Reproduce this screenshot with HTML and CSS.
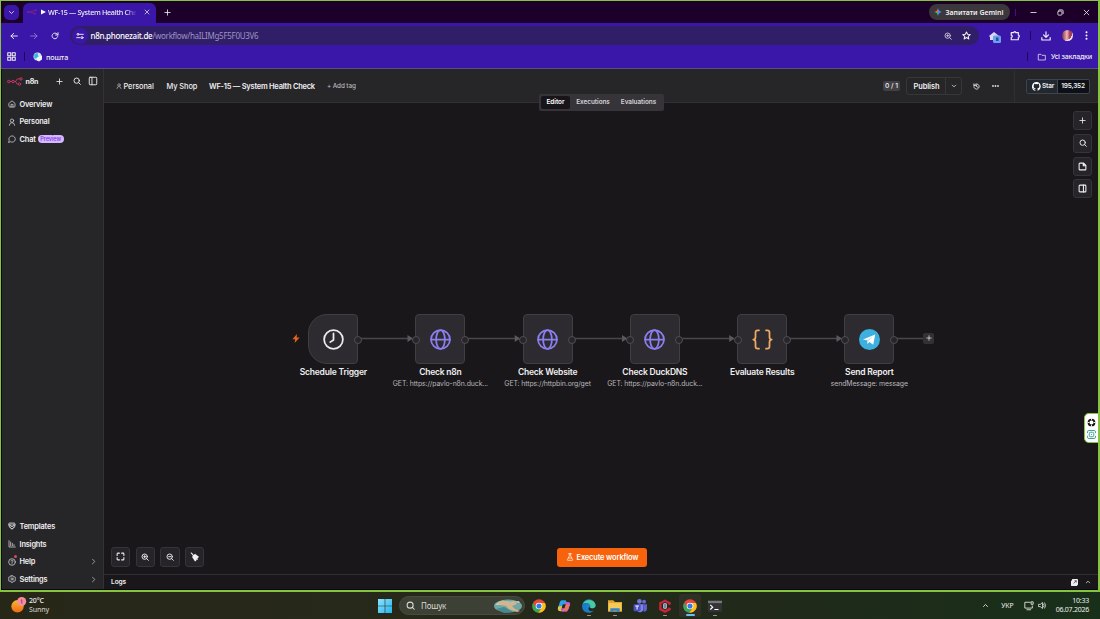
FILE: index.html
```html
<!DOCTYPE html>
<html lang="uk">
<head>
    <meta charset="UTF-8">
    <meta name="viewport" content="width=device-width, initial-scale=1.0">
    <title>▶ WF-15 — System Health Check - n8n</title>
    <link rel="stylesheet" href="styles.css">
</head>
<body>
    <svg class="symbols" width="0" height="0">
        <symbol id="i-chevron-down" viewBox="0 0 24 24"><path d="M5 8.5l7 7 7-7"/></symbol>
        <symbol id="i-chevron-up" viewBox="0 0 24 24"><path d="M5 15.5l7-7 7 7"/></symbol>
        <symbol id="i-chevron-right" viewBox="0 0 24 24"><path d="M8.5 4l8 8-8 8"/></symbol>
        <symbol id="i-x" viewBox="0 0 24 24"><path d="M4 4l16 16M20 4L4 20"/></symbol>
        <symbol id="i-plus" viewBox="0 0 24 24"><path d="M12 3v18M3 12h18"/></symbol>
        <symbol id="i-minus" viewBox="0 0 24 24"><path d="M3 12h18"/></symbol>
        <symbol id="i-back" viewBox="0 0 24 24"><path d="M22 12H3M11 4l-8 8 8 8"/></symbol>
        <symbol id="i-forward" viewBox="0 0 24 24"><path d="M2 12h19M13 4l8 8-8 8"/></symbol>
        <symbol id="i-reload" viewBox="0 0 24 24"><path d="M20 14a8.500 8.500 0 1 1-2-8l3 3M21 2v7h-7"/></symbol>
        <symbol id="i-search" viewBox="0 0 24 24"><circle cx="11" cy="11" r="8"/><path d="M17 17l5 5"/></symbol>
        <symbol id="i-zoom-in" viewBox="0 0 24 24"><circle cx="11" cy="11" r="8"/><path d="M17 17l5 5M11 8v6M8 11h6"/></symbol>
        <symbol id="i-zoom-out" viewBox="0 0 24 24"><circle cx="11" cy="11" r="8"/><path d="M17 17l5 5M8 11h6"/></symbol>
        <symbol id="i-tune" viewBox="0 0 24 24"><circle cx="6" cy="7" r="3"/><path d="M12 7h10M2 17h10"/><circle cx="18" cy="17" r="3"/></symbol>
        <symbol id="i-grid" viewBox="0 0 24 24"><path d="M2 2h8v8H2zM14 2h8v8h-8zM2 14h8v8H2zM14 14h8v8h-8z"/></symbol>
        <symbol id="i-star" viewBox="0 0 24 24"><path d="M12 2.500l2.900 6.400 7 .7-5.300 4.700 1.600 6.900-6.200-3.700-6.200 3.700 1.600-6.900L2.100 9.600l7-.7z"/></symbol>
        <symbol id="i-puzzle" viewBox="0 0 24 24"><path d="M3 4h6a2.500 2.500 0 0 1 5 0h6v6a2.500 2.500 0 0 1 0 5v6H3v-6a2.500 2.500 0 0 0 0-5z"/></symbol>
        <symbol id="i-download" viewBox="0 0 24 24"><path d="M12 2v13M6 9.500l6 6 6-6M2 16v5.500h20V16"/></symbol>
        <symbol id="i-folder" viewBox="0 0 24 24"><path d="M2 4h7l3 3h10v14H2z"/></symbol>
        <symbol id="i-panel" viewBox="0 0 24 24"><rect x="3" y="3" width="18" height="18" rx="2"/><path d="M9.500 3v18"/></symbol>
        <symbol id="i-panel-right" viewBox="0 0 24 24"><rect x="3" y="3" width="18" height="18" rx="2"/><path d="M14.500 3v18"/></symbol>
        <symbol id="i-home" viewBox="0 0 24 24"><path d="M3 10l9-7.500 9 7.500v9a2 2 0 0 1-2 2H5a2 2 0 0 1-2-2z"/><path d="M9 21v-8h6v8"/></symbol>
        <symbol id="i-user" viewBox="0 0 24 24"><circle cx="12" cy="8" r="5"/><path d="M4 22a8 8 0 0 1 16 0"/></symbol>
        <symbol id="i-chat" viewBox="0 0 24 24"><path d="M7.500 20.500A9.500 9.500 0 1 0 3.500 16L2 22z"/></symbol>
        <symbol id="i-box" viewBox="0 0 24 24"><path d="M4 3h16v10l-8 8-8-8zM1 8l11 6 11-6M7 6h10v4l-5 3-5-3zM3 14l9 8 9-8"/></symbol>
        <symbol id="i-insights" viewBox="0 0 24 24"><path d="M3 2v19h19M8 6v11M13 10v7M18 14v3"/></symbol>
        <symbol id="i-help" viewBox="0 0 24 24"><circle cx="12" cy="12" r="10"/><path d="M9 9a3 3 0 1 1 4.500 2.600c-1 .6-1.500 1.200-1.500 2.400M12 17v.8"/></symbol>
        <symbol id="i-gear" viewBox="0 0 24 24"><circle cx="12" cy="12" r="3.200"/><path d="M9.500 2h5l.7 3 2.800 1.200 2.500-1 2 4-1.500 2.800 1.500 2.800-2 4-2.500-1-2.800 1.200-.7 3h-5l-.7-3L6 17.800l-2.500 1-2-4L3 12 1.500 9.200l2-4 2.500 1L8.800 5z"/></symbol>
        <symbol id="i-history" viewBox="0 0 24 24"><path d="M3 3v6h6M3.500 9A9 9 0 1 1 3 13M12 7v5l4 2"/></symbol>
        <symbol id="i-note" viewBox="0 0 24 24"><path d="M15 3H5a2 2 0 0 0-2 2v14a2 2 0 0 0 2 2h14a2 2 0 0 0 2-2V9zM14 3v7h7"/></symbol>
        <symbol id="i-fit" viewBox="0 0 24 24"><path d="M3 9V5a2 2 0 0 1 2-2h4M15 3h4a2 2 0 0 1 2 2v4M21 15v4a2 2 0 0 1-2 2h-4M9 21H5a2 2 0 0 1-2-2v-4"/></symbol>
        <symbol id="i-flask" viewBox="0 0 24 24"><path d="M8 2h8M10 2v7L4 20a1.500 1.500 0 0 0 1.300 2h13.400a1.500 1.500 0 0 0 1.300-2L14 9V2M7 15h10"/></symbol>
        <symbol id="i-n8n" viewBox="0 0 32 18"><circle cx="3.500" cy="9" r="2.400"/><circle cx="12" cy="9" r="2.400"/><circle cx="28" cy="3.800" r="2.400"/><circle cx="25" cy="14.200" r="2.400"/><path d="M6 9h3.500M14.500 9h2c3 0 1.500-5.200 5-5.200h4M16.500 9c3 0 1 5.200 4.500 5.200h1.500"/></symbol>
        <symbol id="i-globe" viewBox="0 0 24 24"><circle cx="12" cy="12" r="10.800"/><ellipse cx="12" cy="12" rx="5" ry="10.800"/><path d="M1.200 12h21.600"/></symbol>
        <symbol id="i-chrome" viewBox="0 0 24 24">
            <circle cx="12" cy="12" r="11.500" fill="#e8453c"/>
            <path d="M2 6.300A11.500 11.500 0 0 0 11 23.500l5.200-8.800L7.500 15z" fill="#34a853"/>
            <path d="M22.300 7H12l4.800 8L11 23.500A11.500 11.500 0 0 0 22.300 7z" fill="#fbc116"/>
            <circle cx="12" cy="12" r="5.700" fill="#fff"/><circle cx="12" cy="12" r="4.400" fill="#3779e6"/>
        </symbol>
    </svg>

    <div class="window">
        <div class="titlebar">
            <div class="tab-search"><svg class="icon s7"><use href="#i-chevron-down"/></svg></div>
            <div class="tab">
                <svg class="n8n-mark tab-mark"><use href="#i-n8n"/></svg>
                <svg class="play" viewBox="0 0 6 6"><path d="M0 0l6 3-6 3z"/></svg>
                <span class="tab-title">WF-15 — System Health Che</span>
                <svg class="icon s6 tab-close"><use href="#i-x"/></svg>
            </div>
            <svg class="icon s7 new-tab"><use href="#i-plus"/></svg>
            <div class="gemini">
                <svg viewBox="0 0 24 24" width="8" height="8">
                    <path d="M12 0q2 10 12 12H12z" fill="#4d8df6"/><path d="M24 12q-10 2-12 12V12z" fill="#4a87ee"/>
                    <path d="M12 24Q10 14 0 12h12z" fill="#3fae62"/><path d="M0 12Q10 10 12 0v12z" fill="#e9684e"/>
                </svg>
                <span>Запитати Gemini</span>
            </div>
            <div class="window-controls">
                <svg class="icon s7"><use href="#i-minus"/></svg>
                <svg class="icon s7" viewBox="0 0 24 24"><rect x="3" y="7" width="14" height="14" rx="3"/><path d="M8 3h9a4 4 0 0 1 4 4v9"/></svg>
                <svg class="icon s7"><use href="#i-x"/></svg>
            </div>
        </div>

        <div class="toolbar">
            <div class="nav">
                <svg class="icon s8"><use href="#i-back"/></svg>
                <svg class="icon s8 disabled"><use href="#i-forward"/></svg>
                <svg class="icon s8"><use href="#i-reload"/></svg>
            </div>
            <div class="address">
                <span class="site-info"><svg class="icon s8"><use href="#i-tune"/></svg></span>
                <span class="url"><b>n8n.phonezait.de</b>/workflow/haILIMg5F5F0U3V6</span>
                <svg class="icon s8 lens"><use href="#i-zoom-in"/></svg>
                <svg class="icon s9"><use href="#i-star"/></svg>
            </div>
            <div class="extensions">
                <div class="ext"><svg viewBox="0 0 12 12" width="12" height="12"><path d="M0 5l5-4 5 4-1 1v3H1V6z" fill="#dcd8ef"/><rect x="4" y="4.500" width="8" height="7.500" rx="1.500" fill="#6ba0f0"/><rect x="7" y="6.500" width="2.500" height="3.500" fill="#284f8f"/></svg></div>
                <svg class="icon s10 puzzle"><use href="#i-puzzle"/></svg>
                <span class="bar-sep"></span>
                <svg class="icon s10"><use href="#i-download"/></svg>
                <div class="avatar"></div>
                <svg class="dots" viewBox="0 0 3 9"><circle cx="1.500" cy="1.200" r="1"/><circle cx="1.500" cy="4.500" r="1"/><circle cx="1.500" cy="7.800" r="1"/></svg>
            </div>
        </div>

        <div class="bookmarks">
            <svg class="icon s9"><use href="#i-grid"/></svg>
            <span class="bar-sep"></span>
            <svg viewBox="0 0 10 10" width="10" height="10"><circle cx="4.500" cy="4.500" r="4" fill="#cfe9f7"/><path d="M1 2.500L4.500.5l1 4.500L1.500 7z" fill="#3eb4da"/><path d="M4 5.500l5-2v4L6 9.500l-2-1z" fill="#f4f2f3"/></svg>
            <span class="bookmark">пошта</span>
            <div class="all-bookmarks">
                <span class="bar-sep"></span>
                <svg class="icon folder"><use href="#i-folder"/></svg>
                <span>Усі закладки</span>
            </div>
        </div>

        <div class="app">
            <aside class="sidebar">
                <div class="brand">
                    <svg class="n8n-mark"><use href="#i-n8n"/></svg>
                    <b>n8n</b>
                    <svg class="icon s7 brand-plus"><use href="#i-plus"/></svg>
                    <svg class="icon s8"><use href="#i-search"/></svg>
                    <svg class="icon s10"><use href="#i-panel"/></svg>
                </div>
                <nav class="menu">
                    <a><svg class="icon s8"><use href="#i-home"/></svg>Overview</a>
                    <a><svg class="icon s8"><use href="#i-user"/></svg>Personal</a>
                    <a><svg class="icon s8"><use href="#i-chat"/></svg>Chat<span class="preview">Preview</span></a>
                </nav>
                <nav class="menu menu-bottom">
                    <a><svg class="icon s8"><use href="#i-box"/></svg>Templates</a>
                    <a><svg class="icon s8"><use href="#i-insights"/></svg>Insights</a>
                    <a class="has-dot"><svg class="icon s8"><use href="#i-help"/></svg>Help<svg class="icon s7 more"><use href="#i-chevron-right"/></svg></a>
                    <a><svg class="icon s8"><use href="#i-gear"/></svg>Settings<svg class="icon s7 more"><use href="#i-chevron-right"/></svg></a>
                </nav>
            </aside>

            <main class="main">
                <header class="header">
                    <svg class="icon crumb-icon"><use href="#i-user"/></svg>
                    <span class="crumb personal">Personal</span>
                    <span class="crumb shop">My Shop</span>
                    <span class="crumb name">WF-15 — System Health Check</span>
                    <span class="add-tag">+ Add tag</span>
                    <div class="actions">
                        <span class="count">0 / 1</span>
                        <div class="publish">
                            <span>Publish</span>
                            <span class="publish-menu"><svg class="icon s6"><use href="#i-chevron-down"/></svg></span>
                        </div>
                        <svg class="icon s7 history"><use href="#i-history"/></svg>
                        <svg class="ellipsis" viewBox="0 0 7 2"><circle cx="1" cy="1" r=".9"/><circle cx="3.500" cy="1" r=".9"/><circle cx="6" cy="1" r=".9"/></svg>
                    </div>
                    <div class="github">
                        <div class="github-btn">
                            <span class="star"><svg viewBox="0 0 16 16" width="9" height="9"><path fill="#fff" d="M8 0a8 8 0 0 0-2.500 15.600c.4.100.5-.2.500-.4v-1.500c-2.200.5-2.700-1-2.700-1-.4-.9-.9-1.200-.9-1.200-.7-.5.100-.5.100-.5.800.100 1.200.8 1.200.8.700 1.200 1.900.9 2.300.7.100-.5.300-.9.500-1.100-1.800-.2-3.600-.9-3.600-4 0-.9.300-1.600.8-2.100 0-.2-.3-1 .1-2.100 0 0 .7-.2 2.200.8a7.600 7.600 0 0 1 4 0c1.500-1 2.200-.8 2.200-.8.4 1.100.100 1.900.100 2.100.500.6.8 1.300.8 2.100 0 3.100-1.900 3.700-3.700 3.900.3.300.6.800.6 1.500v2.200c0 .2.100.5.500.4A8 8 0 0 0 8 0z"/></svg>Star</span>
                            <span class="stars">195,352</span>
                        </div>
                    </div>
                </header>

                <div class="view-tabs"><span class="active">Editor</span><span>Executions</span><span>Evaluations</span></div>

                <section class="canvas">
                    <svg class="edges" viewBox="0 0 995 471">
                        <g class="lines">
                            <path d="M258 235.500h51M365 235.500h51M472 235.500h51M579.500 235.500h51M686.500 235.500h51M794 235.500h30"/>
                        </g>
                        <g class="arrows">
                            <path d="M304.500 232l5.500 3.500-5.500 3.500zM411.700 232l5.500 3.500-5.500 3.500zM519 232l5.500 3.500-5.500 3.500zM626.200 232l5.500 3.500-5.500 3.500zM733.500 232l5.500 3.500-5.500 3.500z"/>
                        </g>
                    </svg>
                    <svg class="bolt" viewBox="0 0 8 10"><path d="M5 0L0 5.700h3L2.500 10 8 4H4.800z"/></svg>

                    <div class="node trigger n1">
                        <svg class="node-icon clock" viewBox="0 0 24 24"><circle cx="12" cy="12" r="10.700"/><path d="M12 5v7.500L8.200 15"/></svg>
                        <i class="port out"></i>
                        <div class="label"><b>Schedule Trigger</b></div>
                    </div>
                    <div class="node n2">
                        <svg class="node-icon http"><use href="#i-globe"/></svg>
                        <i class="port in"></i><i class="port out"></i>
                        <div class="label"><b>Check n8n</b><span>GET: https://pavlo-n8n.duck...</span></div>
                    </div>
                    <div class="node n3">
                        <svg class="node-icon http"><use href="#i-globe"/></svg>
                        <i class="port in"></i><i class="port out"></i>
                        <div class="label"><b>Check Website</b><span>GET: https://httpbin.org/get</span></div>
                    </div>
                    <div class="node n4">
                        <svg class="node-icon http"><use href="#i-globe"/></svg>
                        <i class="port in"></i><i class="port out"></i>
                        <div class="label"><b>Check DuckDNS</b><span>GET: https://pavlo-n8n.duck...</span></div>
                    </div>
                    <div class="node n5">
                        <svg class="node-icon code" viewBox="0 0 24 24"><path d="M8 1.500H6.500A2.500 2.500 0 0 0 4 4v5c0 1.800-1 3-2.500 3C3 12 4 13.200 4 15v5a2.500 2.500 0 0 0 2.500 2.500H8M16 1.500h1.500A2.500 2.500 0 0 1 20 4v5c0 1.800 1 3 2.500 3-1.500 0-2.500 1.200-2.500 3v5a2.500 2.500 0 0 1-2.500 2.500H16"/></svg>
                        <i class="port in"></i><i class="port out"></i>
                        <div class="label"><b>Evaluate Results</b></div>
                    </div>
                    <div class="node n6">
                        <svg class="node-icon" viewBox="0 0 24 24"><circle cx="12" cy="12" r="12" fill="#3db0df"/><path d="M4.500 12L18.500 6.300 16.300 18l-4.500-3.200-2 2.200-.7-4.200z" fill="#fff"/><path d="M9.100 12.800l6.500-4-4.800 5-1 3.200z" fill="#bcdcec"/></svg>
                        <i class="port in"></i><i class="port out"></i>
                        <div class="label"><b>Send Report</b><span>sendMessage: message</span></div>
                    </div>
                    <span class="add-node"><svg class="icon s6"><use href="#i-plus"/></svg></span>

                    <div class="side-tools">
                        <button><svg class="icon s7"><use href="#i-plus"/></svg></button>
                        <button><svg class="icon s8"><use href="#i-search"/></svg></button>
                        <button><svg class="icon s9"><use href="#i-note"/></svg></button>
                        <button><svg class="icon s9"><use href="#i-panel-right"/></svg></button>
                    </div>
                    <div class="zoom-tools">
                        <button><svg class="icon s9"><use href="#i-fit"/></svg></button>
                        <button><svg class="icon s8"><use href="#i-zoom-in"/></svg></button>
                        <button><svg class="icon s8"><use href="#i-zoom-out"/></svg></button>
                        <button><svg viewBox="0 0 24 24" width="10" height="10"><path d="M1 2l3-1 5 6 3-3 10 8-3 2-1 2 1 2-2 1-2-1v3l-3 2-7-11 2-3z" fill="#f2f1f2"/></svg></button>
                    </div>
                    <button class="execute"><svg class="icon s8"><use href="#i-flask"/></svg>Execute workflow</button>
                </section>

                <footer class="logs">
                    <b>Logs</b>
                    <svg class="popout" viewBox="0 0 8 8"><path d="M2 0h5a1 1 0 0 1 1 1v5a1 1 0 0 1-1 1v1H1a1 1 0 0 1-1-1V2h1V1a1 1 0 0 1 1-1z" fill="#eee"/><path d="M3 5l3-3M4 2h2v2" fill="none" stroke="#333" stroke-width=".8"/></svg>
                    <svg class="icon s6"><use href="#i-chevron-up"/></svg>
                </footer>
            </main>
        </div>

        <div class="capture-widget">
            <svg viewBox="0 0 10 10"><circle cx="5" cy="5" r="3.300" fill="none" stroke="#111" stroke-width="2"/><path d="M5 .5v2M5 7.500v2M.5 5h2M7.500 5h2" stroke="#fff" stroke-width="1"/></svg>
            <svg viewBox="0 0 10 10" fill="none" stroke="#25958e"><path d="M.6 3.500V2A1.400 1.400 0 0 1 2 .6h6A1.400 1.400 0 0 1 9.400 2v1.500M.6 6.500V8A1.400 1.400 0 0 0 2 9.400h6A1.400 1.400 0 0 0 9.400 8V6.500"/><rect x="2.500" y="2.500" width="5" height="5" rx="1.500"/><path d="M4.500 5h1"/></svg>
        </div>
    </div>

    <div class="taskbar">
        <div class="weather">
            <svg viewBox="0 0 16 16" width="16" height="16"><defs><linearGradient id="sun" x1="0" y1="0" x2="0" y2="1"><stop offset="0" stop-color="#fbb62c"/><stop offset="1" stop-color="#ee6a18"/></linearGradient></defs><circle cx="6.500" cy="9.300" r="6.200" fill="url(#sun)"/><circle cx="10.700" cy="4.500" r="4.500" fill="#f78ba0"/><path d="M9.800 3.500l1-.8v4" fill="none" stroke="#6b3040" stroke-width=".7"/></svg>
            <div><b>20°C</b><span>Sunny</span></div>
        </div>
        <div class="task-apps">
            <svg class="start" viewBox="0 0 14 14"><defs><linearGradient id="win" x1="0" y1="0" x2="1" y2="1"><stop offset="0" stop-color="#8ae4fd"/><stop offset="1" stop-color="#28b4f1"/></linearGradient></defs><path d="M0 0h6.700v6.700H0zM7.300 0H14v6.700H7.300zM0 7.300h6.700V14H0zM7.300 7.300H14V14H7.300z" fill="url(#win)"/></svg>
            <div class="search">
                <svg class="icon s9"><use href="#i-search"/></svg>
                <span>Пошук</span>
                <svg class="search-art" viewBox="0 0 28 14"><ellipse cx="14" cy="7" rx="14" ry="6.500" fill="#6fa7a4"/><path d="M1 6q5-5 10-4t14 0l1 2-8-1-9 3z" fill="#b9cbbb"/><path d="M4 3q6-3 11 1l5-2 3 3-5 2 3 3 5 2-3 1-8-3-3-3-6-1z" fill="#d3b48d"/><path d="M2 10l8-2 9 5-9 1z" fill="#448a90"/></svg>
            </div>
            <div class="task"><svg><use href="#i-chrome"/></svg></div>
            <div class="task"><svg viewBox="0 0 24 24"><path d="M8 2h7l3 7-5 2-3 9H5q-5 0-3-6l3-9q1-3 3-3z" fill="#2aa4e4"/><path d="M2 13l6-1 4 5-2 4H6q-6 0-4-8z" fill="#e8c23e"/><path d="M16 22H9l-3-5 5-3 3-9h5q5 0 3 6l-3 8q-1 3-3 3z" fill="#b55be0"/><path d="M18 9l-5 1-3 10h6q3 0 4-4l2-7z" fill="#ef7558"/><path d="M10 9h5l-2 7H8z" fill="#262b20"/></svg></div>
            <div class="task running"><svg viewBox="0 0 24 24"><path d="M12 .5A11.500 11.500 0 1 0 20 20.300c-9 2.500-10.500-4-7.500-7.300 0 2 2 3 5 3 4 0 6-2 6-5A11.500 11.500 0 0 0 12 .5z" fill="#1d83d0"/><path d="M1 9C4 1 18-2 23 9c1 6-5 8-9 6 2-5-2-9-7-8-3 0-5 1-6 2z" fill="#4acb9c"/><path d="M1 9c3-3 8-3 11 0-7 0-7 9 1 13C3 25-1 17 1 9z" fill="#187dc5"/></svg></div>
            <div class="task running"><svg viewBox="0 0 24 24"><path d="M0 2h9l3 3h12v17H0z" fill="#e2a72b"/><path d="M1 7h22v13H1z" fill="#f3cb58"/><path d="M4 22v-6h16v6h-5v-2H9v2z" fill="#2f83cf"/></svg></div>
            <div class="task"><svg viewBox="0 0 24 24"><circle cx="11" cy="4" r="4" fill="#7078e0"/><circle cx="19" cy="4.500" r="3.300" fill="#646bd9"/><path d="M8 9h10v8a6 6 0 0 1-10 4z" fill="#7d83ec"/><path d="M18 9h6v7q0 6-6 6z" fill="#5e62cf"/><rect x="1" y="9" width="12" height="12" rx="2" fill="#4a4fc4"/><path d="M4 12h6M7 12v6" stroke="#fff" stroke-width="1.700"/></svg></div>
            <div class="task running"><svg viewBox="0 0 24 24"><path d="M12 1l10 5v3l-4 2V8l-6-3-6 3v8l6 3 6-3v-2l4 2v3l-10 5-10-5V6z" fill="#c92338"/><path d="M9 8l3-1 3 1v8l-3 1-3-1z" fill="#ccd8ed"/><path d="M12 8v8" stroke="#304e7e" stroke-width="2"/></svg></div>
            <div class="task running current"><svg><use href="#i-chrome"/></svg></div>
            <div class="task running"><svg viewBox="0 0 24 24"><rect x="0" y="3" width="24" height="19" rx="1" fill="#343438"/><path d="M0 3h24v4H0z" fill="#77777b"/><path d="M4 10l4 4-4 4M11 18h7" fill="none" stroke="#fff" stroke-width="2"/></svg></div>
        </div>
        <div class="tray">
            <svg class="icon s7"><use href="#i-chevron-up"/></svg>
            <span class="lang">УКР</span>
            <svg class="icon monitor" viewBox="0 0 24 24"><path d="M15 3H2v14h18v-5M7 21h9"/><path d="M18 2h4v6h-4z"/></svg>
            <svg class="icon volume" viewBox="0 0 24 24"><path d="M2 9h4l6-5v16l-6-5H2zM15 8q3 4 0 8M18 5q5 7 0 14"/></svg>
            <div class="clock-text"><span>10:33</span><span>06.07.2026</span></div>
        </div>
    </div>
</body>
</html>
```

FILE: styles.css
```css
* {
    box-sizing: border-box;
}
body {
    margin: 0;
    width: 1100px;
    height: 619px;
    overflow: hidden;
    background: #000;
    color: #f0eff1;
    font-family: Inter, "Liberation Sans", sans-serif;
    font-size: 7.4px;
}
svg {
    display: block;
    flex: none;
}
button {
    font: inherit;
    color: inherit;
    padding: 0;
}
.symbols {
    position: absolute;
}
.icon {
    fill: none;
    stroke: currentColor;
    stroke-width: 2.8;
    stroke-linecap: round;
    stroke-linejoin: round;
}
.s6 { width: 6px; height: 6px; }
.s7 { width: 7px; height: 7px; }
.s8 { width: 8px; height: 8px; }
.s9 { width: 9px; height: 9px; }
.s10 { width: 10px; height: 10px; }

/* browser window */
.window {
    position: relative;
    height: 592px;
    border: 1px solid #86c440;
    border-width: 1px 2px 2px 1px;
    display: flex;
    flex-direction: column;
    background: #3a17a8;
}
.titlebar, .toolbar, .bookmarks {
    font-family: "Noto Sans", "Open Sans", sans-serif;
    display: flex;
    align-items: center;
    flex: none;
}
.titlebar {
    height: 22px;
    background: #1c0029;
}
.tab-search {
    width: 15px;
    height: 15px;
    margin-left: 3px;
    border-radius: 5px;
    background: #3a17a8;
    display: flex;
    align-items: center;
    justify-content: center;
}
.tab {
    width: 133px;
    height: 20px;
    margin: 2px 0 0 4px;
    padding: 0 0 2px 4px;
    border-radius: 6px 6px 0 0;
    background: #3a17a8;
    display: flex;
    align-items: center;
}
.n8n-mark {
    width: 16px;
    height: 9px;
    fill: none;
    stroke: #e5376d;
    stroke-width: 1.7;
}
.tab-mark {
    width: 10px;
    height: 6px;
    stroke: #b02b84;
}
.play {
    width: 5px;
    height: 6px;
    margin: 0 2px 0 4px;
    fill: #fff;
}
.tab-title {
    width: 88px;
    white-space: nowrap;
    font-size: 7.2px;
    letter-spacing: -.32px;
    font-weight: 500;
    -webkit-mask-image: linear-gradient(90deg, #000 88%, transparent 101%);
    mask-image: linear-gradient(90deg, #000 88%, transparent 101%);
}
.tab-close {
    margin-left: 8px;
}
.new-tab {
    margin-left: 8px;
}
.gemini {
    height: 16px;
    width: 81px;
    margin-left: auto;
    padding-left: 5px;
    border-radius: 8px;
    background: #3b373c;
    display: flex;
    align-items: center;
    gap: 3.500px;
    font-size: 7px;
    letter-spacing: -.06px;
    font-weight: 600;
    white-space: nowrap;
}
.window-controls {
    display: flex;
    gap: 19.5px;
    margin-left: 5px;
    padding: 0 8px 0 14px;
    border-left: 1px solid #38158d;
}
.toolbar {
    height: 25px;
}
.nav {
    display: flex;
    gap: 12.5px;
    margin-left: 8.500px;
}
.disabled {
    opacity: .45;
}
.address {
    width: 909px;
    height: 19px;
    margin-left: 11px;
    padding: 0 8px 0 2px;
    border-radius: 10px;
    background: #301e68;
    display: flex;
    align-items: center;
}
.site-info {
    width: 16px;
    height: 16px;
    border-radius: 8px;
    background: #3a17a8;
    display: flex;
    align-items: center;
    justify-content: center;
}
.url {
    margin-left: 3px;
    font-size: 8px;
    letter-spacing: -.29px;
    color: #9e94c0;
}
.url b {
    color: #fff;
    font-weight: 500;
}
.lens {
    margin: 0 10px 0 auto;
    opacity: .8;
}
.extensions {
    display: flex;
    align-items: center;
    margin-left: 10px;
}
.ext {
    margin: 3px 9px 0 0;
}
.bar-sep {
    width: 1px;
    height: 9px;
    background: #1d0b55;
}
.puzzle {
    margin-right: 10px;
}
.puzzle + .bar-sep {
    margin-right: 10px;
}
.avatar {
    width: 11px;
    height: 11px;
    margin: 0 12.500px 0 11px;
    border-radius: 50%;
    background: radial-gradient(circle at 35% 35%, transparent 0 60%, #efe3ea 62%), linear-gradient(90deg, #82304a, #f0b9b4 45%, #a44058 70%);
}
.dots {
    width: 3px;
    height: 9px;
    fill: #fff;
}
.bookmarks {
    height: 21px;
    padding-left: 6px;
    border-bottom: 1px solid #5b4d86;
    font-size: 7.2px;
    font-weight: 500;
    letter-spacing: -.15px;
    padding-bottom: 3px;
}
.bookmarks > .bar-sep {
    margin: 0 8px;
}
.bookmark {
    margin-left: 3px;
}
.all-bookmarks {
    display: flex;
    align-items: center;
    margin: 0 6px 0 auto;
    font-size: 7px;
    letter-spacing: -.2px;
    white-space: nowrap;
}
.folder {
    width: 10px;
    height: 8px;
    margin: 0 4px 0 9px;
    stroke-width: 2.2;
}

/* n8n */
.app {
    flex: 1;
    min-height: 0;
    display: flex;
    border: 1px solid #0b090d;
    border-width: 0 0 1px 1px;
    background: #19171a;
}
.sidebar {
    width: 102px;
    background: #262528;
    border-right: 1px solid #333136;
    display: flex;
    flex-direction: column;
}
.brand {
    height: 24px;
    padding-left: 5px;
    display: flex;
    align-items: center;
}
.brand b {
    width: 16px;
    margin: 0 14.500px 0 2.500px;
    font-size: 7px;
    letter-spacing: -.2px;
}
.brand-plus {
    margin-right: 10px;
}
.brand .s10 {
    margin-left: 7px;
    stroke-width: 2.2;
}
.menu {
    margin-top: 2.500px;
    display: flex;
    flex-direction: column;
}
.menu a {
    position: relative;
    height: 17.6px;
    padding: 0 6px 0 5.500px;
    display: flex;
    align-items: center;
    gap: 4px;
    font-weight: 600;
    font-size: 7.4px;
    letter-spacing: -.17px;
}
.menu .icon {
    stroke-width: 2.3;
    opacity: .85;
}
.menu .more {
    margin-left: auto;
}
.menu-bottom {
    margin: auto 0 1px;
}
.has-dot::after {
    content: "";
    position: absolute;
    left: 12px;
    top: 2px;
    width: 3px;
    height: 3px;
    border-radius: 50%;
    background: #dc4a5f;
}
.preview {
    height: 8px;
    margin-left: -2px;
    padding: 0 2.500px;
    border-radius: 4px;
    background: #d5b8ff;
    color: #7d38df;
    font-size: 5.6px;
    font-weight: 500;
    letter-spacing: -.05px;
    line-height: 8px;
}
.main {
    position: relative;
    flex: 1;
    display: flex;
    flex-direction: column;
}
.header {
    height: 34px;
    background: #262528;
    border-bottom: 1px solid #323034;
    padding-top: 1px;
    display: flex;
    align-items: center;
    white-space: nowrap;
    flex: none;
    font-weight: 500;
    letter-spacing: -.07px;
}
.crumb-icon {
    width: 6px;
    height: 6px;
    margin: 0 1.500px 0 12px;
    opacity: .7;
}
.personal { width: 43px; }
.shop { width: 42.5px; }
.name {
    width: 118px;
    font-size: 7.5px;
    font-weight: 600;
    letter-spacing: -.25px;
}
.add-tag {
    color: #bdbbc0;
    font-size: 6.3px;
}
.actions {
    display: flex;
    align-items: center;
    margin-left: auto;
}
.count {
    width: 17px;
    height: 10px;
    margin-right: 6px;
    border-radius: 2px;
    background: #414044;
    text-align: center;
    line-height: 10px;
    font-size: 6.7px;
}
.publish {
    height: 18px;
    width: 56px;
    border: 1px solid #38363b;
    border-radius: 3px;
    display: flex;
    align-items: center;
    font-weight: 600;
    font-size: 7.4px;
    padding-left: 6.500px;
}
.publish-menu {
    width: 16px;
    height: 100%;
    margin-left: auto;
    border-left: 1px solid #38363b;
    display: flex;
    align-items: center;
    justify-content: center;
}
.history {
    margin: 0 12px 0 11px;
}
.ellipsis {
    width: 7px;
    height: 2px;
    fill: #ddd;
}
.github {
    height: 100%;
    width: 84px;
    margin-left: 15px;
    border-left: 1px solid #302e33;
    display: flex;
    align-items: center;
    padding-left: 10.500px;
}
.github-btn {
    width: 64px;
    height: 15px;
    border: 1px solid #3d444d;
    border-radius: 2px;
    background: #0d1117;
    display: flex;
    font-size: 6.5px;
    font-weight: 600;
    letter-spacing: -.2px;
    line-height: 13px;
}
.star {
    width: 31px;
    padding-left: 5px;
    background: #212830;
    border-right: 1px solid #3d444d;
    display: flex;
    align-items: center;
    gap: 1.500px;
}
.stars {
    flex: 1;
    text-align: center;
}
.view-tabs {
    position: absolute;
    left: 435px;
    top: 25px;
    z-index: 2;
    width: 125px;
    height: 17px;
    padding: 2px;
    border-radius: 2px;
    background: #363438;
    display: flex;
    font-size: 6.4px;
    font-weight: 600;
    letter-spacing: -.03px;
    line-height: 13px;
    text-align: center;
    color: #d5d3d7;
}
.view-tabs .active {
    width: 29px;
    background: #171519;
    color: #fff;
    border-radius: 2px;
}
.view-tabs span:nth-child(2) { width: 46px; }
.view-tabs span:nth-child(3) { width: 45px; }

/* workflow canvas */
.canvas {
    position: relative;
    flex: 1;
}
.edges {
    position: absolute;
    left: -1px;
    top: 0;
    width: 995px;
    height: 471px;
}
.lines {
    stroke: #49474c;
    stroke-width: 1.5;
}
.arrows {
    fill: #5a585d;
}
.bolt {
    position: absolute;
    left: 188px;
    top: 230.500px;
    width: 8px;
    height: 9px;
    fill: #e3621d;
}
.node {
    position: absolute;
    top: 211px;
    width: 50px;
    height: 50px;
    border: 1px solid #403e43;
    border-radius: 4px;
    background: #2d2b2f;
    display: flex;
    align-items: center;
    justify-content: center;
}
.trigger {
    border-radius: 19px 4px 4px 19px;
}
.n1 { left: 204.300px; }
.n2 { left: 311.400px; }
.n3 { left: 418.600px; }
.n4 { left: 525.900px; }
.n5 { left: 633.200px; }
.n6 { left: 740.300px; }
.node-icon {
    width: 21px;
    height: 21px;
}
.clock, .http, .code {
    fill: none;
    stroke-width: 2;
    stroke-linecap: round;
    stroke-linejoin: round;
}
.clock { stroke: #ececee; }
.http { stroke: #8b7ff0; }
.code { stroke: #efab65; }
.port {
    position: absolute;
    top: 20.500px;
    width: 8px;
    height: 8px;
    border: 1px solid #504e53;
    border-radius: 50%;
    background: #272529;
}
.port.in { left: -4.500px; }
.port.out { right: -4.500px; }
.label {
    position: absolute;
    top: 51px;
    left: 50%;
    transform: translateX(-50%);
    display: flex;
    flex-direction: column;
    align-items: center;
    white-space: nowrap;
}
.label b {
    font-size: 8.5px;
    font-weight: 600;
    line-height: 13px;
    letter-spacing: -.2px;
}
.label span {
    font-size: 6.9px;
    line-height: 10px;
    letter-spacing: -.09px;
    color: #b8b6bb;
}
.add-node {
    position: absolute;
    left: 819px;
    top: 229.500px;
    width: 11px;
    height: 11px;
    border-radius: 2px;
    background: #333136;
    display: flex;
    align-items: center;
    justify-content: center;
}
.side-tools, .zoom-tools {
    position: absolute;
    display: flex;
}
.side-tools {
    right: 6px;
    top: 8px;
    flex-direction: column;
    gap: 3.800px;
}
.zoom-tools {
    left: 7px;
    bottom: 7.500px;
    gap: 5.500px;
}
.side-tools button, .zoom-tools button {
    width: 19px;
    height: 19px;
    border: 1px solid #363439;
    border-radius: 3px;
    background: #262428;
    display: flex;
    align-items: center;
    justify-content: center;
}
.zoom-tools button {
    height: 20px;
    width: 19.200px;
}
.execute {
    position: absolute;
    left: 453px;
    bottom: 7.500px;
    width: 90px;
    height: 19px;
    border: 0;
    border-radius: 3px;
    background: #f7630c;
    color: #fff;
    font-size: 7.400px;
    letter-spacing: -.12px;
    font-weight: 600;
    display: flex;
    align-items: center;
    justify-content: center;
    gap: 3px;
}
.execute .icon {
    stroke-width: 2;
}
.logs {
    height: 15px;
    padding: 0 7px;
    border-top: 1px solid #302e33;
    display: flex;
    align-items: center;
    font-size: 6.600px;
    letter-spacing: -.1px;
    flex: none;
}
.logs b {
    font-weight: 600;
}
.popout {
    width: 7px;
    height: 7px;
    margin: 0 7.500px 0 auto;
}
.capture-widget {
    position: absolute;
    right: -2px;
    top: 412px;
    width: 16px;
    height: 30px;
    border: 1.500px solid #86c440;
    border-right-width: 2px;
    border-radius: 5px 0 0 5px;
    background: #fff;
    display: flex;
    flex-direction: column;
    align-items: center;
    justify-content: center;
    gap: 3px;
}
.capture-widget svg {
    width: 9px;
    height: 9px;
}

/* windows taskbar */
.taskbar {
    height: 27px;
    background: linear-gradient(90deg, #272718, #26291a 45%, #20291a 70%, #183019);
    display: grid;
    grid-template-columns: 378px 1fr auto;
    align-items: center;
    font-family: "Noto Sans", "Open Sans", sans-serif;
    font-size: 7px;
}
.weather {
    display: flex;
    align-items: center;
    margin-top: -2px;
    padding-left: 11px;
    gap: 2px;
    line-height: 9px;
    letter-spacing: -.15px;
}
.weather b, .weather span {
    display: block;
    font-weight: 500;
}
.weather span {
    color: #c5c5bf;
}
.task-apps {
    display: flex;
    align-items: center;
    height: 27px;
}
.start {
    width: 14px;
    height: 14px;
}
.search {
    width: 126px;
    height: 19px;
    margin: 0 3px 0 7px;
    padding: 0 2px 0 6px;
    border-radius: 10px;
    border: 1px solid #484c3f;
    background: #3d4135;
    display: flex;
    align-items: center;
    gap: 6px;
    font-size: 8px;
    letter-spacing: -.2px;
    color: #d9dad5;
}
.search-art {
    width: 28px;
    height: 14px;
    margin-left: auto;
}
.task {
    position: relative;
    width: 22px;
    height: 23px;
    margin-right: 3.200px;
    border-radius: 3px;
    display: flex;
    align-items: center;
    justify-content: center;
}
.task svg {
    width: 14px;
    height: 14px;
}
.running::after {
    content: "";
    position: absolute;
    bottom: 1px;
    left: 9px;
    width: 4px;
    height: 1.500px;
    border-radius: 1px;
    background: #94978f;
}
.current {
    background: #2d3126;
}
.current::after {
    left: 7px;
    width: 9px;
    height: 2px;
    background: #60c3ef;
}
.tray {
    display: flex;
    align-items: center;
    padding-right: 11px;
}
.lang {
    margin: 0 10px 0 12.500px;
    font-size: 6.800px;
}
.monitor {
    width: 10px;
    height: 10px;
    stroke-width: 2;
}
.volume {
    width: 9px;
    height: 9px;
    margin: 0 9px 0 4px;
    stroke-width: 2;
}
.clock-text {
    display: flex;
    flex-direction: column;
    align-items: flex-end;
    margin-top: -1px;
    line-height: 9px;
    letter-spacing: -.25px;
}
```
